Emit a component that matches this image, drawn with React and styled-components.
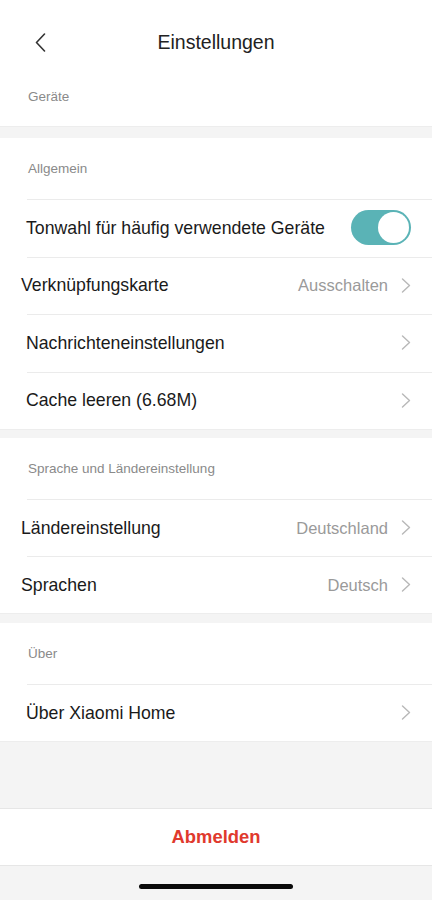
import React, { useState } from 'react';
import styled, { createGlobalStyle } from 'styled-components';

const GlobalStyle = createGlobalStyle`
    html, body {
        margin: 0;
        padding: 0;
        background: #f4f4f4;
    }
    body {
        font-family: "Liberation Sans", Arial, sans-serif;
        -webkit-font-smoothing: antialiased;
    }
`;

const Page = styled.div`
    width: 432px;
    height: 900px;
    display: flex;
    flex-direction: column;
    background: #f4f4f4;
    overflow: hidden;
`;

const Header = styled.header`
    height: 67px;
    flex-shrink: 0;
    display: grid;
    grid-template-columns: 60px 1fr 60px;
    align-items: center;
    background: #fff;
    padding-top: 17px;
    box-sizing: border-box;
`;

const BackButton = styled.button`
    border: none;
    background: none;
    padding: 0 0 0 35px;
    height: 30px;
    display: flex;
    align-items: center;
    cursor: pointer;
`;

const Title = styled.h1`
    margin: 0;
    text-align: center;
    font-size: 19.5px;
    font-weight: 400;
    color: #222;
`;

const Section = styled.section`
    background: #fff;
    margin-bottom: ${(p) => p.gap || 10}px;
    box-shadow: 0 1px 0 #ededed;
`;

const SectionLabel = styled.div`
    height: ${(p) => p.height || 61}px;
    display: flex;
    align-items: center;
    padding-left: 28px;
    font-size: 13.5px;
    color: #8a8a8a;
    box-sizing: border-box;
    padding-bottom: 1px;
`;

const Row = styled.div`
    height: ${(p) => p.h || 57}px;
    display: flex;
    align-items: center;
    padding-left: ${(p) => p.indent}px;
    padding-right: 20px;
    position: relative;
    &::before {
        content: '';
        position: absolute;
        top: 0;
        left: 27px;
        right: 0;
        border-top: 1px solid #ebebeb;
    }
`;

const RowLabel = styled.span`
    flex: 1;
    font-size: 17.7px;
    color: #1a1a1a;
    padding-top: 1px;
`;

const RowValue = styled.span`
    font-size: 16.5px;
    color: #9a9a9a;
    margin-right: 13px;
    padding-top: 1px;
`;

const Chevron = styled.svg`
    width: 10px;
    height: 15px;
    margin-right: 1px;
    flex-shrink: 0;
`;

const Track = styled.button`
    width: 60px;
    height: 35px;
    border-radius: 18px;
    border: none;
    padding: 2px;
    margin-right: 1px;
    background: ${(p) => (p.on ? '#5ab3b6' : '#dcdcdc')};
    display: flex;
    justify-content: ${(p) => (p.on ? 'flex-end' : 'flex-start')};
    align-items: center;
    cursor: pointer;
    box-sizing: border-box;
`;

const Knob = styled.span`
    width: 31px;
    height: 31px;
    border-radius: 50%;
    background: #fff;
`;

const Spacer = styled.div`
    flex: 1;
`;

const LogoutBar = styled.button`
    height: 58px;
    flex-shrink: 0;
    border: none;
    border-top: 1px solid #e6e6e6;
    border-bottom: 1px solid #e6e6e6;
    background: #fff;
    color: #e0392d;
    font-family: "Liberation Sans", Arial, sans-serif;
    font-size: 18.4px;
    font-weight: 700;
    cursor: pointer;
`;

const HomeArea = styled.div`
    height: 34px;
    flex-shrink: 0;
    display: flex;
    justify-content: center;
    padding-top: 18px;
    box-sizing: border-box;
`;

const HomeIndicator = styled.div`
    width: 154px;
    height: 5px;
    border-radius: 3px;
    background: #0a0a0a;
`;

const ChevronRight = () => (
    <Chevron viewBox="0 0 10 15">
        <path d="M1.5 1 L8.5 7.5 L1.5 14" fill="none" stroke="#b8b8b8" strokeWidth="1.4" strokeLinecap="round" strokeLinejoin="round" />
    </Chevron>
);

const NavRow = ({ label, value, indent = 26, h }) => (
    <Row indent={indent} h={h}>
        <RowLabel>{label}</RowLabel>
        {value && <RowValue>{value}</RowValue>}
        <ChevronRight />
    </Row>
);

const App = () => {
    const [toneOn, setToneOn] = useState(true);
    return (
        <Page>
            <GlobalStyle />
            <Header>
                <BackButton aria-label="Zurück">
                    <svg width="11" height="19" viewBox="0 0 11 19">
                        <path d="M9.5 1 L1.5 9.5 L9.5 18" fill="none" stroke="#333" strokeWidth="1.6" strokeLinecap="round" strokeLinejoin="round" />
                    </svg>
                </BackButton>
                <Title>Einstellungen</Title>
                <div />
            </Header>

            <Section gap={12}>
                <SectionLabel height={59}>Geräte</SectionLabel>
            </Section>

            <Section gap={9}>
                <SectionLabel>Allgemein</SectionLabel>
                <Row indent={26} h={57.5}>
                    <RowLabel>Tonwahl für häufig verwendete Geräte</RowLabel>
                    <Track on={toneOn} onClick={() => setToneOn(!toneOn)}>
                        <Knob />
                    </Track>
                </Row>
                <NavRow label="Verknüpfungskarte" value="Ausschalten" indent={21} h={57.5} />
                <NavRow label="Nachrichteneinstellungen" h={57.5} />
                <NavRow label="Cache leeren (6.68M)" h={57.5} />
            </Section>

            <Section gap={10}>
                <SectionLabel>Sprache und Ländereinstellung</SectionLabel>
                <NavRow label="Ländereinstellung" value="Deutschland" indent={21} />
                <NavRow label="Sprachen" value="Deutsch" indent={21} />
            </Section>

            <Section gap={0}>
                <SectionLabel>Über</SectionLabel>
                <NavRow label="Über Xiaomi Home" />
            </Section>

            <Spacer />
            <LogoutBar>Abmelden</LogoutBar>
            <HomeArea>
                <HomeIndicator />
            </HomeArea>
        </Page>
    );
};

export default App;
